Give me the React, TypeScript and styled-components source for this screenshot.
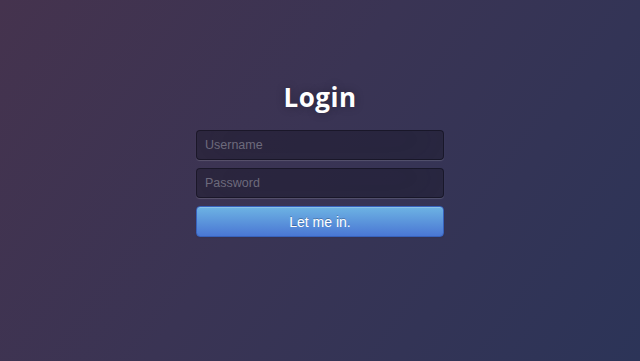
import { FC } from "react";
import styled, { createGlobalStyle } from "styled-components";

const GlobalStyle = createGlobalStyle`
  html, body {
    margin: 0;
    padding: 0;
    width: 100%;
    height: 100%;
  }
  body {
    font-family: "Open Sans", "Liberation Sans", sans-serif;
  }
  #root {
    height: 100%;
  }
`;

const Page = styled.div`
  width: 100%;
  height: 361px;
  background: linear-gradient(125deg, #45334e 0%, #3a3454 45%, #2c3458 100%);
  display: flex;
  justify-content: center;
  box-sizing: border-box;
  padding-top: 79px;
`;

const Form = styled.form`
  width: 248px;
  display: flex;
  flex-direction: column;
  gap: 8px;
`;

const Title = styled.h1`
  margin: 0 0 7px;
  color: #fff;
  font-family: "Open Sans", sans-serif;
  font-weight: 700;
  font-size: 26px;
  line-height: 36px;
  letter-spacing: 0.5px;
  text-align: center;
  text-shadow: 0 0 10px rgba(0, 0, 0, 0.3);
`;

const Field = styled.input`
  box-sizing: border-box;
  width: 100%;
  height: 30px;
  padding: 0 8px;
  font-family: "Liberation Sans", Arial, sans-serif;
  font-size: 12.5px;
  color: #fff;
  background: rgba(10, 8, 24, 0.4);
  border: 1px solid rgba(0, 0, 0, 0.3);
  border-radius: 4px;
  outline: none;
  box-shadow: inset 0 -5px 45px rgba(100, 100, 100, 0.12),
    0 1px 1px rgba(255, 255, 255, 0.15);

  &::placeholder {
    color: #6d6a7c;
  }
`;

const Submit = styled.button`
  box-sizing: border-box;
  width: 100%;
  height: 31px;
  font-family: "Liberation Sans", Arial, sans-serif;
  font-size: 14px;
  color: #fff;
  text-shadow: 0 -1px 0 rgba(0, 0, 0, 0.25);
  background: linear-gradient(to bottom, #6db3e3, #4a77d4);
  border: 1px solid #3762bc;
  border-radius: 4px;
  box-shadow: inset 0 1px 0 rgba(255, 255, 255, 0.2),
    0 1px 2px rgba(0, 0, 0, 0.05);
  cursor: pointer;
`;

const App: FC = () => {
  return (
    <>
      <GlobalStyle />
      <Page>
        <Form onSubmit={(e) => e.preventDefault()}>
          <Title>Login</Title>
          <Field type="text" placeholder="Username" />
          <Field type="password" placeholder="Password" />
          <Submit type="submit">Let me in.</Submit>
        </Form>
      </Page>
    </>
  );
};

export default App;
